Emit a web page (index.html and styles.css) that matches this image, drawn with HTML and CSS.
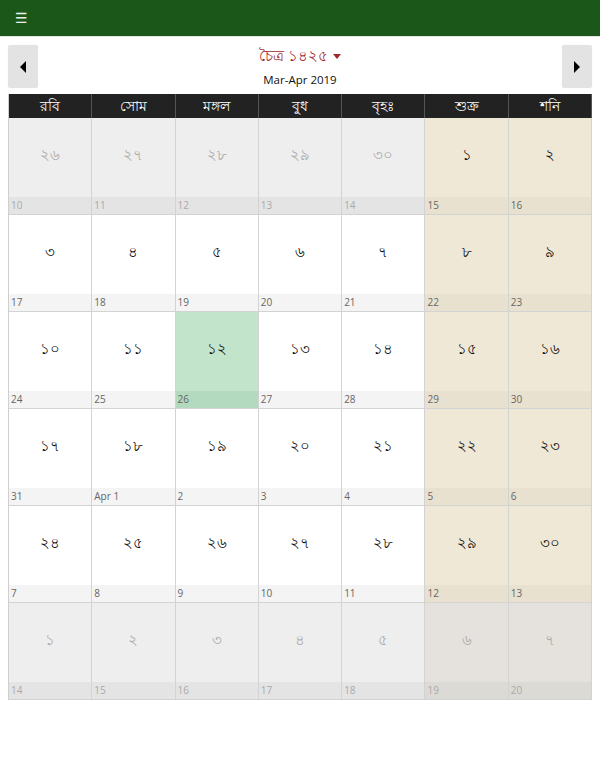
FILE: index.html
```html
<!DOCTYPE html>
<html lang="bn">
<head>
<meta charset="utf-8">
<title>বাংলা ক্যালেন্ডার</title>
<link rel="stylesheet" href="styles.css">
</head>
<body>
<header class="topbar"><span class="menu">☰</span></header>
<div class="nav">
  <button class="navbtn"><svg width="8" height="12" viewBox="0 0 8 12"><path d="M7 0 L1 6 L7 12 Z" fill="#000"/></svg></button>
  <div class="title">
    <div class="month">চৈত্র ১৪২৫ <svg class="caret" width="8" height="5" viewBox="0 0 8 5"><path d="M0 0 H8 L4 5 Z" fill="#a0282d"/></svg></div>
    <div class="sub">Mar-Apr 2019</div>
  </div>
  <button class="navbtn"><svg width="8" height="12" viewBox="0 0 8 12"><path d="M1 0 L7 6 L1 12 Z" fill="#000"/></svg></button>
</div>
<div class="cal">
  <div class="hd">রবি</div><div class="hd">সোম</div><div class="hd">মঙ্গল</div><div class="hd">বুধ</div><div class="hd">বৃহঃ</div><div class="hd">শুক্র</div><div class="hd">শনি</div>

  <div class="cell other"><div class="bn">২৬</div><div class="en">10</div></div>
  <div class="cell other"><div class="bn">২৭</div><div class="en">11</div></div>
  <div class="cell other"><div class="bn">২৮</div><div class="en">12</div></div>
  <div class="cell other"><div class="bn">২৯</div><div class="en">13</div></div>
  <div class="cell other"><div class="bn">৩০</div><div class="en">14</div></div>
  <div class="cell wk"><div class="bn">১</div><div class="en">15</div></div>
  <div class="cell wk"><div class="bn">২</div><div class="en">16</div></div>

  <div class="cell"><div class="bn">৩</div><div class="en">17</div></div>
  <div class="cell"><div class="bn">৪</div><div class="en">18</div></div>
  <div class="cell"><div class="bn">৫</div><div class="en">19</div></div>
  <div class="cell"><div class="bn">৬</div><div class="en">20</div></div>
  <div class="cell"><div class="bn">৭</div><div class="en">21</div></div>
  <div class="cell wk"><div class="bn">৮</div><div class="en">22</div></div>
  <div class="cell wk"><div class="bn">৯</div><div class="en">23</div></div>

  <div class="cell"><div class="bn">১০</div><div class="en">24</div></div>
  <div class="cell"><div class="bn">১১</div><div class="en">25</div></div>
  <div class="cell today"><div class="bn">১২</div><div class="en">26</div></div>
  <div class="cell"><div class="bn">১৩</div><div class="en">27</div></div>
  <div class="cell"><div class="bn">১৪</div><div class="en">28</div></div>
  <div class="cell wk"><div class="bn">১৫</div><div class="en">29</div></div>
  <div class="cell wk"><div class="bn">১৬</div><div class="en">30</div></div>

  <div class="cell"><div class="bn">১৭</div><div class="en">31</div></div>
  <div class="cell"><div class="bn">১৮</div><div class="en">Apr 1</div></div>
  <div class="cell"><div class="bn">১৯</div><div class="en">2</div></div>
  <div class="cell"><div class="bn">২০</div><div class="en">3</div></div>
  <div class="cell"><div class="bn">২১</div><div class="en">4</div></div>
  <div class="cell wk"><div class="bn">২২</div><div class="en">5</div></div>
  <div class="cell wk"><div class="bn">২৩</div><div class="en">6</div></div>

  <div class="cell"><div class="bn">২৪</div><div class="en">7</div></div>
  <div class="cell"><div class="bn">২৫</div><div class="en">8</div></div>
  <div class="cell"><div class="bn">২৬</div><div class="en">9</div></div>
  <div class="cell"><div class="bn">২৭</div><div class="en">10</div></div>
  <div class="cell"><div class="bn">২৮</div><div class="en">11</div></div>
  <div class="cell wk"><div class="bn">২৯</div><div class="en">12</div></div>
  <div class="cell wk"><div class="bn">৩০</div><div class="en">13</div></div>

  <div class="cell other"><div class="bn">১</div><div class="en">14</div></div>
  <div class="cell other"><div class="bn">২</div><div class="en">15</div></div>
  <div class="cell other"><div class="bn">৩</div><div class="en">16</div></div>
  <div class="cell other"><div class="bn">৪</div><div class="en">17</div></div>
  <div class="cell other"><div class="bn">৫</div><div class="en">18</div></div>
  <div class="cell other owk"><div class="bn">৬</div><div class="en">19</div></div>
  <div class="cell other owk"><div class="bn">৭</div><div class="en">20</div></div>
</div>
</body>
</html>
```

FILE: styles.css
```css
* { box-sizing: border-box; }
html, body { margin: 0; padding: 0; background: #fff; }
body { font-family: "Open Sans", "Noto Sans", sans-serif; color: #222; }

.topbar {
  height: 37px;
  background: #1b5719;
  border-bottom: 1px solid #dfe6df;
  display: flex;
  align-items: center;
  padding-left: 15px;
}
.menu { color: #e8f0e8; font-size: 14px; line-height: 1; font-family: "DejaVu Sans", sans-serif; }

.nav {
  display: flex;
  justify-content: space-between;
  align-items: flex-start;
  padding: 8px 8px 0 8px;
  height: 57px;
}
.navbtn {
  width: 30px;
  height: 43px;
  border: none;
  border-radius: 3px;
  background: #e3e3e3;
  display: flex;
  align-items: center;
  justify-content: center;
  padding: 0;
  box-shadow: 0 0 1px rgba(0,0,0,0.15);
}
.title { text-align: center; padding-top: 1px; }
.month { color: #a0282d; font-size: 15px; line-height: 18px; }
.caret { vertical-align: middle; margin-left: 1px; }
.sub { font-size: 11.5px; line-height: 16px; margin-top: 8px; color: #111; }

.cal {
  margin: 0 8px;
  display: grid;
  grid-template-columns: repeat(7, 1fr);
  border-left: 1px solid #cfcfcf;
}
.hd {
  background: #222;
  color: #fff;
  height: 24px;
  line-height: 24px;
  text-align: center;
  font-size: 14px;
  border-right: 1px solid #555;
}
.cell {
  height: 97px;
  display: flex;
  flex-direction: column;
  border-right: 1px solid #d3d3d3;
  border-bottom: 1px solid #d3d3d3;
  background: #fff;
}
.bn {
  flex: 1;
  display: flex;
  align-items: center;
  justify-content: center;
  padding-bottom: 4px;
  font-size: 15px;
  color: #111;
}
.en {
  height: 17px;
  line-height: 17px;
  font-size: 10px;
  padding-left: 2px;
  color: #666;
  background: #f4f4f4;
}
.wk { background: #efe8d7; }
.wk .en { background: #e9e1cf; }
.today { background: #c1e4cb; }
.today .en { background: #b3d9be; }
.other { background: #eeeeee; }
.other .bn { color: #aaa; }
.other .en { background: #e4e4e4; color: #aaa; }
.owk { background: #e5e2dd; }
.owk .en { background: #dcdad5; }
```
